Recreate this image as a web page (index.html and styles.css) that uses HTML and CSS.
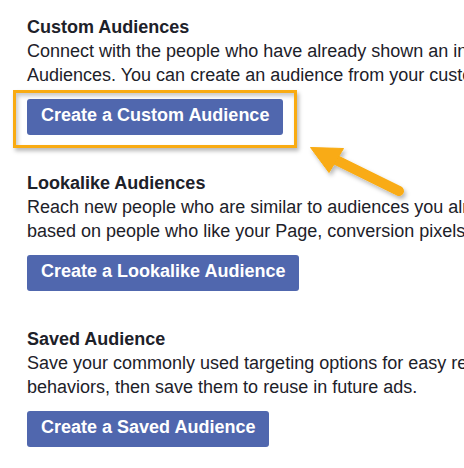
FILE: index.html
```html
<!DOCTYPE html>
<html>
<head>
<meta charset="utf-8">
<link rel="stylesheet" href="styles.css">
</head>
<body>
<div class="page">
  <section class="block">
    <h2 class="title">Custom Audiences</h2>
    <p class="desc">Connect with the people who have already shown an interest in your business or product with Custom<br>Audiences. You can create an audience from your customer lists, website traffic or app activity.</p>
    <button class="btn">Create a Custom Audience</button>
  </section>
  <section class="block">
    <h2 class="title">Lookalike Audiences</h2>
    <p class="desc">Reach new people who are similar to audiences you already care about. You can create a Lookalike Audience<br>based on people who like your Page, conversion pixels, or existing Custom Audiences.</p>
    <button class="btn">Create a Lookalike Audience</button>
  </section>
  <section class="block">
    <h2 class="title">Saved Audience</h2>
    <p class="desc">Save your commonly used targeting options for easy reuse. Choose your demographics, interests and<br>behaviors, then save them to reuse in future ads.</p>
    <button class="btn">Create a Saved Audience</button>
  </section>

  <div class="highlight"></div>
  <svg class="arrow" width="464" height="468" viewBox="0 0 464 468" xmlns="http://www.w3.org/2000/svg">
    <defs>
      <filter id="sh" x="-20%" y="-20%" width="150%" height="150%">
        <feDropShadow dx="2" dy="3" stdDeviation="2" flood-color="#000" flood-opacity="0.28"/>
      </filter>
    </defs>
    <g filter="url(#sh)" fill="#f9ab12" stroke="#f9ab12">
      <line x1="332" y1="158" x2="399" y2="191" stroke-width="10" stroke-linecap="round"/>
      <polygon points="310.5,147.5 343.5,148.5 329,172.5" stroke-width="1" stroke-linejoin="round"/>
    </g>
  </svg>
</div>
</body>
</html>
```

FILE: styles.css
```css
html, body {
  margin: 0;
  padding: 0;
  background: #ffffff;
}

body {
  width: 464px;
  height: 468px;
  overflow: hidden;
  font-family: "Liberation Sans", Arial, sans-serif;
  color: #1d2129;
}

.page {
  position: relative;
  width: 464px;
  height: 468px;
  padding: 15px 0 0 27px;
  box-sizing: border-box;
  display: flex;
  flex-direction: column;
  gap: 36px;
}

.block {
  display: flex;
  flex-direction: column;
  align-items: flex-start;
}

.title {
  margin: 0;
  font-size: 18px;
  line-height: 24px;
  font-weight: bold;
  color: #1d2129;
  white-space: nowrap;
}

.desc {
  margin: 0 0 12px 0;
  font-size: 18px;
  line-height: 24px;
  color: #1d2129;
  white-space: nowrap;
}

.btn {
  height: 36px;
  margin: 0;
  padding: 0 14px 3px 14px;
  box-sizing: border-box;
  border: none;
  border-radius: 3px;
  background: #5067ae;
  color: #ffffff;
  font-family: "Liberation Sans", Arial, sans-serif;
  font-size: 18px;
  font-weight: bold;
  line-height: 33px;
  white-space: nowrap;
}

.highlight {
  position: absolute;
  left: 13px;
  top: 90px;
  width: 284px;
  height: 58px;
  box-sizing: border-box;
  border: 3px solid #f9ab12;
  box-shadow: 2px 3px 4px rgba(0, 0, 0, 0.28), inset 2px 3px 4px rgba(0, 0, 0, 0.22);
}

.arrow {
  position: absolute;
  left: 0;
  top: 0;
  pointer-events: none;
}
```
